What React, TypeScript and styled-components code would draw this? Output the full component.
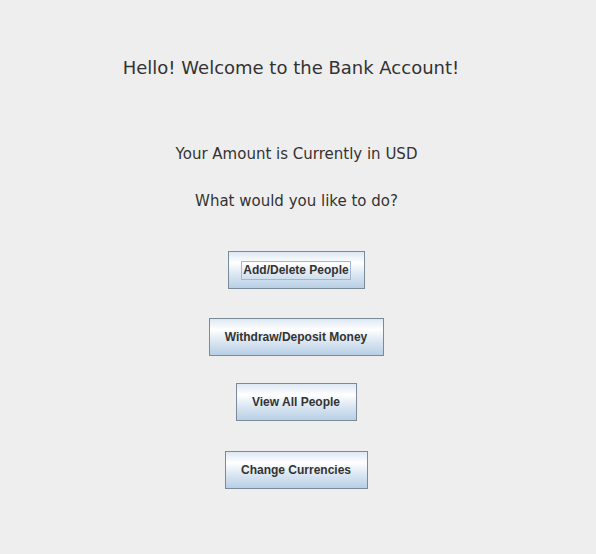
import React from "react";
import styled, { createGlobalStyle } from "styled-components";

const Global = createGlobalStyle`
  html, body { margin: 0; padding: 0; background: #eeeeee; }
  body { width: 596px; height: 554px; overflow: hidden; }
`;

const Frame = styled.div`
  width: 596px;
  height: 554px;
  background: #eeeeee;
  display: flex;
  flex-direction: column;
  align-items: center;
  box-sizing: border-box;
  padding-top: 55px;
`;

const Title = styled.div`
  font-family: "DejaVu Sans", sans-serif;
  font-size: 18px;
  color: #333333;
  line-height: 26px;
  margin-right: 14px;
`;

const Label = styled.div<{ $top: number }>`
  font-family: "DejaVu Sans", sans-serif;
  font-size: 15px;
  color: #333333;
  line-height: 20px;
  margin-top: ${(p) => p.$top}px;
  margin-right: 3px;
`;

const Button = styled.button<{ $top: number; $w: number }>`
  margin-top: ${(p) => p.$top}px;
  margin-right: 4px;
  width: ${(p) => p.$w}px;
  height: 38px;
  box-sizing: border-box;
  border: 1px solid #7a8a99;
  border-radius: 0;
  padding: 0;
  display: flex;
  align-items: center;
  justify-content: center;
  background: linear-gradient(
    to bottom,
    #dde8f3 0%,
    #ffffff 30%,
    #dde8f3 60%,
    #b8cfe5 100%
  );
  font-family: "Liberation Sans", Arial, sans-serif;
  font-weight: bold;
  font-size: 12px;
  color: #333333;
  cursor: default;
`;

const Focus = styled.span<{ $on?: boolean }>`
  padding: 1px 1px;
  border: 1px solid ${(p) => (p.$on ? "#a3b8cc" : "transparent")};
  line-height: 15px;
`;

export default function App() {
  return (
    <>
      <Global />
      <Frame>
        <Title>Hello! Welcome to the Bank Account!</Title>
        <Label $top={63}>Your Amount is Currently in USD</Label>
        <Label $top={27}>What would you like to do?</Label>
        <Button $top={40} $w={137}>
          <Focus $on>Add/Delete People</Focus>
        </Button>
        <Button $top={29} $w={175}>
          <Focus>Withdraw/Deposit Money</Focus>
        </Button>
        <Button $top={27} $w={121}>
          <Focus>View All People</Focus>
        </Button>
        <Button $top={30} $w={143}>
          <Focus>Change Currencies</Focus>
        </Button>
      </Frame>
    </>
  );
}
